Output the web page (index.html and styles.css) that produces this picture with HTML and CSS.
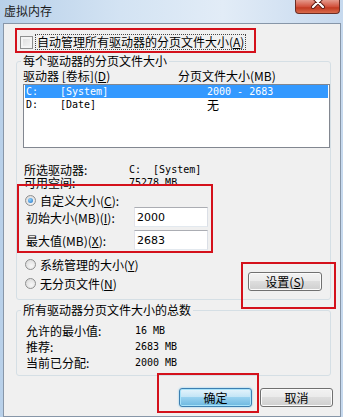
FILE: index.html
```html
<!DOCTYPE html>
<html lang="zh-CN">
<head>
    <meta charset="UTF-8">
    <title>虚拟内存</title>
    <link rel="stylesheet" href="styles.css">
</head>
<body>

<div class="window">
    <div class="titlebar">
        <span class="title">虚拟内存</span>
        <span class="close">
            <svg width="45" height="14" viewBox="0 0 45 14">
                <path d="M18 -3 L28 7 M28 -3 L18 7" stroke="#5a1a12" stroke-width="4" stroke-linecap="round"/>
                <path d="M18 -3 L28 7 M28 -3 L18 7" stroke="#fff" stroke-width="2.2" stroke-linecap="round"/>
            </svg>
        </span>
    </div>

    <div class="client">
        <div class="auto-row">
            <span class="checkbox"></span>
            <span class="focus">自动管理所有驱动器的分页文件大小(<u>A</u>)</span>
        </div>

        <fieldset class="group group-drive">
            <legend>每个驱动器的分页文件大小</legend>
            <div class="cols">
                <span class="col-drive">驱动器 [卷标](<u>D</u>)</span>
                <span>分页文件大小(MB)</span>
            </div>
            <div class="list">
                <div class="row selected">
                    <span class="c1 mono">C:</span>
                    <span class="c2 mono">[System]</span>
                    <span class="mono">2000 - 2683</span>
                </div>
                <div class="row">
                    <span class="c1 mono">D:</span>
                    <span class="c2 mono">[Date]</span>
                    <span>无</span>
                </div>
            </div>

            <div class="info">
                <div class="info-row"><span class="info-label">所选驱动器:</span><span class="mono">C:&nbsp;&nbsp;[System]</span></div>
                <div class="info-row"><span class="info-label">可用空间:</span><span class="mono">75278 MB</span></div>
            </div>

            <div class="options">
                <div class="choices">
                    <div class="custom">
                        <div class="radio-row"><span class="radio on"></span><span>自定义大小(<u>C</u>):</span></div>
                        <div class="field"><span class="field-label">初始大小(MB)(<u>I</u>):</span><input type="text" value="2000"></div>
                        <div class="field"><span class="field-label">最大值(MB)(<u>X</u>):</span><input type="text" value="2683"></div>
                    </div>
                    <div class="radio-row system"><span class="radio"></span><span>系统管理的大小(<u>Y</u>)</span></div>
                    <div class="radio-row none"><span class="radio"></span><span>无分页文件(<u>N</u>)</span></div>
                </div>
                <button class="btn btn-set">设置(<u>S</u>)</button>
            </div>
        </fieldset>

        <fieldset class="group group-total">
            <legend>所有驱动器分页文件大小的总数</legend>
            <div class="total-row"><span class="total-label">允许的最小值:</span><span class="mono">16 MB</span></div>
            <div class="total-row"><span class="total-label">推荐:</span><span class="mono">2683 MB</span></div>
            <div class="total-row"><span class="total-label">当前已分配:</span><span class="mono">2000 MB</span></div>
        </fieldset>

        <div class="footer">
            <button class="btn btn-default">确定</button>
            <button class="btn">取消</button>
        </div>
    </div>

    <!-- red annotation boxes -->
    <div class="mark mark-auto"></div>
    <div class="mark mark-custom"></div>
    <div class="mark mark-set"></div>
    <div class="mark mark-ok"></div>
</div>

</body>
</html>
```

FILE: styles.css
```css
body{
    margin: 0;
    font-family: "Noto Sans CJK SC", sans-serif;
    font-size: 12px;
    color: #000;
}

u{
    text-decoration: underline;
}

.mono{
    font-family: "DejaVu Sans Mono", monospace;
    font-size: 10px;
}

.window{
    position: relative;
    width: 343px;
    height: 417px;
    overflow: hidden;
    background: linear-gradient(to right, #b8d0e9, #d3e3f3 35%, #e2ecf7 65%, #c6d9ee);
}

.titlebar{
    display: flex;
    align-items: flex-start;
    height: 23px;
}

.title{
    padding: 5px 0 0 4px;
    line-height: 12px;
    color: #1a1a1a;
}

.close{
    display: block;
    margin-left: auto;
    margin-right: 3px;
    width: 45px;
    height: 14px;
    box-sizing: border-box;
    border: 1px solid #6b2d24;
    border-top: none;
    border-radius: 0 0 4px 4px;
    background: linear-gradient(#e59a8c, #d2533e 50%, #c23b22 60%, #d86b4c);
    overflow: hidden;
}

.close svg{
    display: block;
    margin: 0 0 0 -1px;
}

.client{
    margin: 0 2px 0 3px;
    height: 394px;
    box-sizing: border-box;
    border: 1px solid #8796a8;
    background-color: #f0f0f0;
}

/* checkbox row */
.auto-row{
    display: flex;
    align-items: center;
    gap: 2px;
    height: 16px;
    margin: 10px 0 0 16px;
}

.checkbox{
    width: 13px;
    height: 13px;
    box-sizing: border-box;
    border: 1px solid #8e8f8f;
    background: linear-gradient(135deg, #dcdcdc, #f6f6f6);
    box-shadow: inset 0 0 0 2px #f4f4f4;
}

.focus{
    line-height: 14px;
    padding: 0 1px;
    border: 1px dotted #444;
}

/* group boxes */
.group{
    margin: 5px 0 0 12px;
    padding: 0 0 9px 0;
    width: 315px;
    box-sizing: border-box;
    min-width: 0;
    border: 1px solid #d5dfe5;
    border-radius: 3px;
}

.group legend{
    margin-left: 4px;
    padding: 0 2px;
    line-height: 12px;
}

.cols{
    display: flex;
    margin-top: 3px;
    padding-left: 6px;
    line-height: 12px;
}

.col-drive{
    width: 155px;
}

.list{
    margin: 2px 0 0 6px;
    width: 307px;
    height: 64px;
    box-sizing: border-box;
    border: 1px solid #828790;
    background-color: #fff;
    padding: 0 1px;
}

.row{
    display: flex;
    height: 13px;
    line-height: 13px;
    padding-left: 1px;
}

.row.selected{
    background-color: #3399ff;
    color: #fff;
}

.c1{
    width: 34px;
}

.c2{
    width: 147px;
}

.info{
    margin-top: 15px;
    padding-left: 7px;
}

.info-row{
    display: flex;
    line-height: 13px;
}

.info-label{
    width: 105px;
}

.options{
    display: flex;
}

.choices{
    flex: 1;
}

.custom{
    padding-top: 5px;
}

.radio-row{
    display: flex;
    align-items: center;
    gap: 4px;
    height: 13px;
    padding-left: 8px;
}

.radio-row.system{
    margin-top: 8px;
}

.radio-row.none{
    margin-top: 6px;
}

.radio{
    position: relative;
    width: 11px;
    height: 11px;
    box-sizing: border-box;
    border: 1px solid #8e8f8f;
    border-radius: 50%;
    background: radial-gradient(circle at 60% 65%, #f8f8f8, #d4d4d4);
}

.radio.on::after{
    content: "";
    position: absolute;
    left: 2px;
    top: 2px;
    width: 5px;
    height: 5px;
    border-radius: 50%;
    background: radial-gradient(circle at 40% 35%, #8fd3ff, #1f6fc0);
}

.field{
    display: flex;
    align-items: center;
    height: 20px;
    padding-left: 9px;
}

.field + .field{
    margin-top: 3px;
}

.field-label{
    width: 108px;
}

.field input{
    width: 74px;
    height: 20px;
    box-sizing: border-box;
    margin: 0;
    padding: 0 2px;
    border: 1px solid #abadb3;
    border-color: #abadb3 #dbdfe6 #e3e9ef #e2e3ea;
    background-color: #fff;
    font-family: "DejaVu Sans", sans-serif;
    font-size: 11px;
    color: #000;
}

/* buttons */
.btn{
    width: 73px;
    height: 19px;
    padding: 0;
    box-sizing: border-box;
    border: 1px solid #707070;
    border-radius: 3px;
    background: linear-gradient(#f2f2f2, #ebebeb 45%, #dddddd 50%, #cfcfcf);
    box-shadow: inset 0 0 0 1px #fbfbfb;
    font-family: inherit;
    font-size: 12px;
    line-height: 17px;
    color: #000;
}

.btn-set{
    align-self: flex-end;
    margin: 0 8px -1px 0;
    width: 74px;
}

.btn-default{
    border-color: #3c7fb1;
    background: linear-gradient(#e5f4fc, #c4e5f6 45%, #98d1ef 50%, #6cb8e0);
    box-shadow: inset 0 0 0 1px #a8e3fa, 0 0 2px #6fc4ee;
}

.group-total{
    margin-top: 4px;
    padding-top: 7px;
    padding-bottom: 4px;
}

.total-row{
    display: flex;
    line-height: 16px;
    padding-left: 9px;
}

.total-label{
    width: 109px;
}

.footer{
    display: flex;
    justify-content: flex-end;
    gap: 8px;
    margin-top: 12px;
    padding-right: 7px;
}

/* annotation boxes */
.mark{
    position: absolute;
    box-sizing: border-box;
    border: 2px solid #d4111b;
}

.mark-auto{
    left: 15px;
    top: 28px;
    width: 241px;
    height: 25px;
}

.mark-custom{
    left: 17px;
    top: 184px;
    width: 196px;
    height: 69px;
}

.mark-set{
    left: 241px;
    top: 262px;
    width: 95px;
    height: 47px;
}

.mark-ok{
    left: 157px;
    top: 373px;
    width: 102px;
    height: 40px;
}
```
